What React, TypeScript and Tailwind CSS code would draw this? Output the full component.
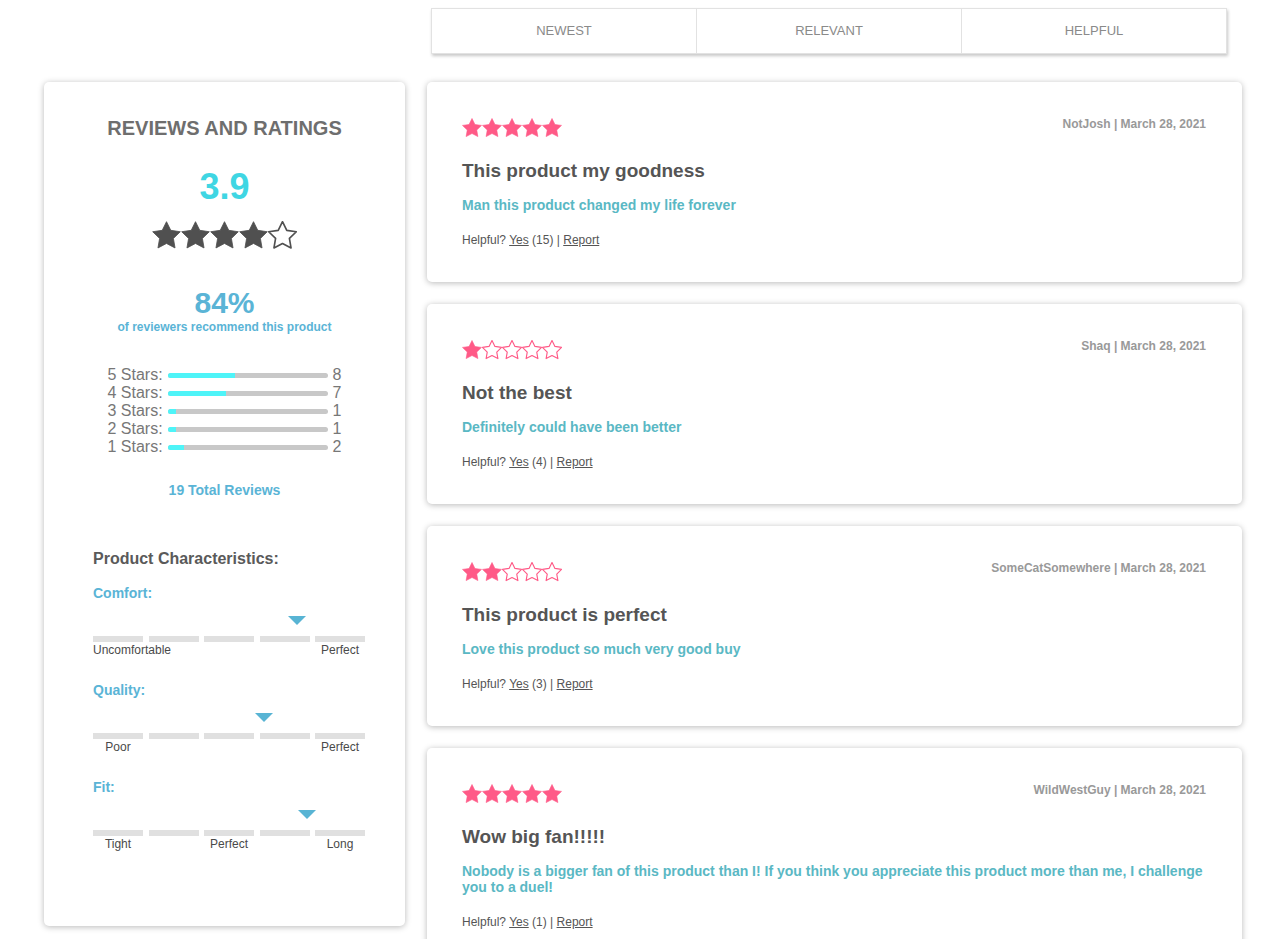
import React from "react";

const font = { fontFamily: '"Liberation Sans", Arial, Helvetica, sans-serif' };

type Review = {
  rating: number;
  user: string;
  date: string;
  title: string;
  body: string;
  helpful: number;
};

const reviews: Review[] = [
  { rating: 5, user: "NotJosh", date: "March 28, 2021", title: "This product my goodness", body: "Man this product changed my life forever", helpful: 15 },
  { rating: 1, user: "Shaq", date: "March 28, 2021", title: "Not the best", body: "Definitely could have been better", helpful: 4 },
  { rating: 2, user: "SomeCatSomewhere", date: "March 28, 2021", title: "This product is perfect", body: "Love this product so much very good buy", helpful: 3 },
  {
    rating: 5,
    user: "WildWestGuy",
    date: "March 28, 2021",
    title: "Wow big fan!!!!!",
    body: "Nobody is a bigger fan of this product than I! If you think you appreciate this product more than me, I challenge you to a duel!",
    helpful: 1,
  },
];

const breakdown = [
  { stars: 5, count: 8 },
  { stars: 4, count: 7 },
  { stars: 3, count: 1 },
  { stars: 2, count: 1 },
  { stars: 1, count: 2 },
];

const characteristics = [
  { name: "Comfort", pos: 75, labels: ["Uncomfortable", "", "", "", "Perfect"] },
  { name: "Quality", pos: 63, labels: ["Poor", "", "", "", "Perfect"] },
  { name: "Fit", pos: 78.7, labels: ["Tight", "", "Perfect", "", "Long"] },
];

const STAR = "12,2 15.09,8.26 22,9.27 17,14.14 18.18,21.02 12,17.77 5.82,21.02 7,14.14 2,9.27 8.91,8.26";

function Star({ filled, color, size }: { filled: boolean; color: string; size: number }) {
  return (
    <svg width={size} height={size} viewBox="1.5 1.5 21 21" className="shrink-0">
      <polygon
        points={STAR}
        fill={filled ? color : "none"}
        stroke={color}
        strokeWidth={filled ? 0.6 : 1.2}
        strokeLinejoin="round"
      />
    </svg>
  );
}

function Stars({ rating, color, size }: { rating: number; color: string; size: number }) {
  return (
    <div className="flex">
      {[1, 2, 3, 4, 5].map((i) => (
        <Star key={i} filled={i <= rating} color={color} size={size} />
      ))}
    </div>
  );
}

function SortTabs() {
  return (
    <div className="ml-[387px] flex w-[796px] h-[46px] border border-[#e2e2e2] bg-white shadow-[1px_2px_3px_rgba(0,0,0,0.22)]">
      {["NEWEST", "RELEVANT", "HELPFUL"].map((t, i) => (
        <div
          key={t}
          className={
            "flex-1 flex items-center justify-center text-[13px] text-[#8a8a8a] " +
            (i > 0 ? "border-l border-[#e2e2e2]" : "")
          }
        >
          {t}
        </div>
      ))}
    </div>
  );
}

function RatingsPanel() {
  const total = 19;
  return (
    <div className="w-[361px] h-[844px] shrink-0 bg-white rounded-[5px] shadow-[0_1px_6px_rgba(0,0,0,0.28)] pt-[34px]">
      <h2 className="text-center text-[20px] leading-[24px] font-bold text-[#6e6e6e]">REVIEWS AND RATINGS</h2>
      <div className="mt-[27px] text-center text-[36px] leading-[40px] font-bold text-[#3fd6e3]">3.9</div>
      <div className="mt-[14px] flex justify-center">
        <Stars rating={4} color="#505050" size={29} />
      </div>
      <div className="mt-[36px] text-center text-[30px] leading-[34px] font-bold text-[#5ab4d6]">84%</div>
      <div className="text-center text-[12px] leading-[14px] font-bold text-[#5ab4d6]">
        of reviewers recommend this product
      </div>

      <div className="mt-[32px] flex flex-col items-center">
        {breakdown.map((b) => (
          <div key={b.stars} className="flex items-center h-[18px] text-[16px] leading-[18px] text-[#777] whitespace-nowrap">
            <span className="w-[56px] shrink-0">{b.stars} Stars:</span>
            <div className="ml-[4px] w-[160px] shrink-0 h-[5px] rounded-full bg-[#c8c8c8] overflow-hidden">
              <div className="h-full bg-[#4ef4f8]" style={{ width: `${(b.count / total) * 100}%` }} />
            </div>
            <span className="ml-[5px] w-[9px] shrink-0">{b.count}</span>
          </div>
        ))}
      </div>

      <div className="mt-[26px] text-center text-[14px] leading-[16px] font-bold text-[#5ab4d6]">19 Total Reviews</div>

      <div className="mt-[51px] pl-[49px] pr-[40px]">
        <div className="text-[16px] leading-[20px] font-bold text-[#5a5a5a]">Product Characteristics:</div>
        <div className="mt-[16px] flex flex-col gap-[25px]">
          {characteristics.map((c) => (
            <div key={c.name}>
              <div className="text-[14px] leading-[16px] font-bold text-[#5ab4d6]">{c.name}:</div>
              <div className="h-[35px] pt-[15px]">
                <svg
                  width="18"
                  height="9"
                  viewBox="0 0 18 9"
                  style={{ marginLeft: `calc(${c.pos}% - 9px)` }}
                >
                  <polygon points="0,0 18,0 9,9" fill="#58b4d4" />
                </svg>
              </div>
              <div className="grid grid-cols-5 gap-x-[5.5px]">
                {c.labels.map((_, i) => (
                  <div key={i} className="h-[6px] bg-[#e0e0e0]" />
                ))}
              </div>
              <div className="mt-px grid grid-cols-5 gap-x-[5.5px]">
                {c.labels.map((l, i) => (
                  <div key={i} className="text-center whitespace-nowrap text-[12px] leading-[14px] text-[#4a4a4a]">
                    {l}
                  </div>
                ))}
              </div>
            </div>
          ))}
        </div>
      </div>
    </div>
  );
}

function ReviewCard({ r }: { r: Review }) {
  return (
    <div className="bg-white rounded-[5px] shadow-[0_1px_6px_rgba(0,0,0,0.28)] pt-[34px] pb-[35px] pl-[35px] pr-[36px]">
      <div className="flex justify-between items-start h-[20px]">
        <div className="mt-[2px]">
          <Stars rating={r.rating} color="#ff5a87" size={20} />
        </div>
        <span className="mt-px text-[12px] leading-[14px] font-bold text-[#999]">
          {r.user} | {r.date}
        </span>
      </div>
      <h3 className="mt-[23px] text-[19px] leading-[24px] font-bold text-[#555]">{r.title}</h3>
      <p className="mt-[14px] text-[14px] leading-[16px] font-bold text-[#5ab8c4]">{r.body}</p>
      <div className="mt-[20px] text-[12px] leading-[14px] text-[#555]">
        Helpful? <span className="underline">Yes</span> ({r.helpful}) | <span className="underline">Report</span>
      </div>
    </div>
  );
}

export default function App() {
  return (
    <div className="min-h-screen bg-white pl-[44px] pt-[8px]" style={font}>
      <SortTabs />
      <div className="mt-[28px] flex gap-[22px] items-start">
        <RatingsPanel />
        <div className="w-[815px] flex flex-col gap-[22px]">
          {reviews.map((r) => (
            <ReviewCard key={r.user} r={r} />
          ))}
        </div>
      </div>
    </div>
  );
}
